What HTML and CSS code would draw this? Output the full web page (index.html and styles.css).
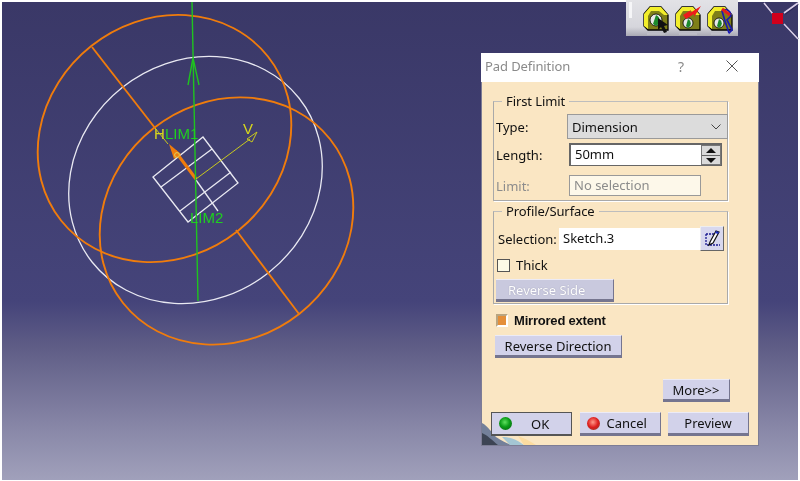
FILE: index.html
```html
<!DOCTYPE html>
<html lang="en">
<head>
    <meta charset="UTF-8">
    <title>Pad Definition</title>
    <link rel="stylesheet" href="styles.css">
</head>
<body>
<div class="viewport">

    <svg class="scene" width="800" height="481" viewBox="0 0 800 481">
        <g fill="none" stroke="#e9e9f2" stroke-width="1.3">
            <ellipse cx="195.5" cy="180" rx="132" ry="118" transform="rotate(-38.4 195.5 180)"/>
            <path d="M153 177 L203 137 L238 183 L188 222 Z"/>
            <path d="M161 187 L212 149"/>
            <path d="M180 211 L231 172"/>
            <path d="M196 180 L218 211"/>
        </g>
        <g fill="none" stroke="#f07c0c" stroke-width="1.9">
            <ellipse cx="164.5" cy="138.5" rx="132" ry="118" transform="rotate(-38.4 164.5 138.5)"/>
            <ellipse cx="226.5" cy="221" rx="132" ry="118" transform="rotate(-38.4 226.5 221)"/>
            <path d="M92 47 L155 128"/>
            <path d="M236 230 L299 314"/>
            <path d="M196 179 L175 151" stroke-width="3.2"/>
        </g>
        <path d="M169 144 L181 154 L174 159 Z" fill="#f07c0c"/>
        <circle cx="177" cy="155" r="2.4" fill="none" stroke="#d8d060" stroke-width="1"/>
        <g fill="none" stroke="#1fc41f" stroke-width="1.4">
            <path d="M192 2 L198 301"/>
            <path d="M193 58 L188 85 M193 58 L199 85"/>
        </g>
        <g fill="none" stroke="#c9c91e" stroke-width="1">
            <path d="M196 179 L250 139"/>
            <path d="M247 139 L257 132 L252 142 Z"/>
            <path d="M155 128 L168 144"/>
        </g>
        <text class="scene-label scene-label-yellow" x="154" y="139">H</text>
        <text class="scene-label scene-label-green" x="165" y="139">LIM1</text>
        <text class="scene-label scene-label-green" x="190" y="223">LIM2</text>
        <text class="scene-label scene-label-yellow" x="243" y="134">V</text>
        <path d="M764 3 L773 14 M784 24 L797 38 M784 13 L797 3" fill="none" stroke="#2a2858" stroke-width="2" transform="translate(1 1)"/>
        <path d="M764 3 L773 14 M784 24 L798 39 M784 13 L798 3" fill="none" stroke="#d9cfe8" stroke-width="1.6"/>
        <rect x="772" y="13" width="11" height="11" fill="#d0001c"/>
    </svg>

    <div class="toolbar">
        <span class="toolbar-grip"></span>
        <svg class="tool-icon" width="26" height="30" viewBox="0 0 26 30">
            <path d="M1 9 L7 2 L18 2 L25 10 L25 25 L5 25 L1 21 Z" fill="#7f7f18" stroke="#000" stroke-width="1.3"/>
            <path d="M1 9 L7 2 L18 2 L25 10 L21 10 L16 6 L8 6 L5 11 L5 24 L1 21 Z" fill="#f2ee2c"/>
            <circle cx="13" cy="15" r="6" fill="#e8e8e8" stroke="#000" stroke-width="0.8"/>
            <path d="M13 10 a6 6 0 0 1 0 11 l-3 -2 Z" fill="#1c8a2c"/>
            <path d="M15 13 L15 25 L18 22 L21 28 L24 27 L21 21 L25 20 Z" fill="#111"/>
            <path d="M4 29 L22 29" stroke="#c6c6ce" stroke-width="1"/>
        </svg>
        <svg class="tool-icon" width="26" height="30" viewBox="0 0 26 30">
            <path d="M1 9 L7 2 L18 2 L25 10 L25 25 L5 25 L1 21 Z" fill="#7f7f18" stroke="#000" stroke-width="1.3"/>
            <path d="M1 9 L7 2 L18 2 L25 10 L21 10 L16 6 L8 6 L5 11 L5 24 L1 21 Z" fill="#f2ee2c"/>
            <circle cx="13" cy="18" r="5" fill="#e8e8e8" stroke="#000" stroke-width="0.8"/>
            <path d="M13 14 a5 5 0 0 1 0 9 l-2 -2 Z" fill="#1c8a2c"/>
            <path d="M8 10 L16 5 L15 8 L26 1 L19 12 L19 9 L11 14 Z" fill="#ee1c1c"/>
            <path d="M4 29 L22 29" stroke="#c6c6ce" stroke-width="1"/>
        </svg>
        <svg class="tool-icon" width="26" height="30" viewBox="0 0 26 30">
            <path d="M1 9 L7 2 L18 2 L25 10 L25 25 L5 25 L1 21 Z" fill="#7f7f18" stroke="#000" stroke-width="1.3"/>
            <path d="M1 9 L7 2 L18 2 L25 10 L21 10 L16 6 L8 6 L5 11 L5 24 L1 21 Z" fill="#f2ee2c"/>
            <circle cx="12" cy="18" r="5" fill="#e8e8e8" stroke="#000" stroke-width="0.8"/>
            <path d="M12 14 a5 5 0 0 1 0 9 l-2 -2 Z" fill="#1c8a2c"/>
            <path d="M15 6 a5 4 30 1 1 8 6 L20 15 L25 25 L22 28 L18 16 Z" fill="none" stroke="#1a1ab0" stroke-width="1.7"/>
            <path d="M15 4 L23 10" stroke="#e21c1c" stroke-width="3"/>
            <path d="M4 29 L22 29" stroke="#c6c6ce" stroke-width="1"/>
        </svg>
    </div>

    <div class="dialog">
        <div class="dialog-title">
            <span class="dialog-title-text">Pad Definition</span>
            <span class="dialog-help">?</span>
            <svg class="dialog-close" width="12" height="12" viewBox="0 0 12 12">
                <path d="M0.5 0.5 L11.5 11.5 M11.5 0.5 L0.5 11.5" fill="none" stroke="#555" stroke-width="1"/>
            </svg>
        </div>

        <div class="dialog-body">
            <svg class="dialog-swoosh" width="54" height="22" viewBox="0 0 54 22">
                <path d="M0 0 C6 3 10 10 14 14 C20 18 24 20 30 22 L0 22 Z" fill="#74809a"/>
                <path d="M0 10 C5 12 10 17 16 22 L0 22 Z" fill="#3d4454"/>
                <path d="M20 14 C30 14 36 18 42 22 L28 22 Z" fill="#a4c6d4"/>
                <path d="M36 13 C42 15 48 18 54 22 L42 22 Z" fill="#fcdca0"/>
            </svg>

            <fieldset class="group group-limit">
                <legend>First Limit</legend>
                <div class="row row-type">
                    <span class="row-label">Type:</span>
                    <div class="combo">
                        <span>Dimension</span>
                        <svg width="10" height="6" viewBox="0 0 10 6"><path d="M0.5 0.5 L5 5 L9.5 0.5" fill="none" stroke="#444"/></svg>
                    </div>
                </div>
                <div class="row row-length">
                    <span class="row-label">Length:</span>
                    <div class="spinner">
                        <span class="spinner-value">50mm</span>
                        <div class="spinner-arrows">
                            <span class="arrow-up"></span>
                            <span class="arrow-down"></span>
                        </div>
                    </div>
                </div>
                <div class="row row-limit">
                    <span class="row-label row-label-off">Limit:</span>
                    <div class="field field-off">No selection</div>
                </div>
            </fieldset>

            <fieldset class="group group-profile">
                <legend>Profile/Surface</legend>
                <div class="row row-selection">
                    <span class="row-label">Selection:</span>
                    <div class="field field-sketch">Sketch.3</div>
                    <button class="sketch-btn" type="button">
                        <svg width="20" height="20" viewBox="0 0 20 20">
                            <path d="M3 5 L12 5 M3 5 L3 16 L17 16" fill="none" stroke="#1a1a90" stroke-width="1.3" stroke-dasharray="2 1"/>
                            <path d="M7 13 L13 2 L16 3 L10 14 L6 16 Z" fill="#fff" stroke="#111" stroke-width="1.2"/>
                            <path d="M13 2 L16 3 L15 5 L12 4 Z" fill="#2030c0"/>
                        </svg>
                    </button>
                </div>
                <label class="check-row"><span class="check"></span>Thick</label>
                <button class="btn btn-off btn-side" type="button">Reverse Side</button>
            </fieldset>

            <div class="mirror-row">
                <span class="mirror-check"></span>
                <span class="mirror-text">Mirrored extent</span>
            </div>
            <button class="btn btn-direction" type="button">Reverse Direction</button>

            <div class="more-row">
                <button class="btn btn-more" type="button">More&gt;&gt;</button>
            </div>

            <div class="actions">
                <button class="btn btn-action btn-ok" type="button"><span class="led led-green"></span>OK</button>
                <button class="btn btn-action btn-cancel" type="button"><span class="led led-red"></span>Cancel</button>
                <button class="btn btn-action" type="button">Preview</button>
            </div>
        </div>
    </div>
</div>
</body>
</html>
```

FILE: styles.css
```css
/* Page */
html, body {
    margin: 0;
    padding: 0;
    background-color: #fff;
}
* { box-sizing: border-box; }
.viewport {
    position: relative;
    width: 800px;
    height: 481px;
    overflow: hidden;
    font-family: "Noto Sans", "Open Sans", Arial, sans-serif;
    font-size: 13px;
    color: #111;
}
.scene {
    position: absolute;
    left: 0;
    top: 0;
    background: linear-gradient(to bottom, #3a3867 0, #45447a 300px, #5f5d86 345px, #8a89a9 430px, #a2a2bc 481px) no-repeat 2px 2px / 796px 478px;
    filter: blur(0.3px);
}
.scene-label {
    font-family: "Liberation Sans", Arial, sans-serif;
    font-size: 15px;
}
.scene-label-green { fill: #1fd01f; }
.scene-label-yellow { fill: #d6d61e; }

/* Toolbar */
.toolbar {
    position: absolute;
    left: 626px;
    top: 0;
    width: 112px;
    height: 36px;
    display: flex;
    align-items: flex-start;
    gap: 6px;
    padding: 5px 0 0 3px;
    background: linear-gradient(to bottom, #e2e2e6 0, #d6d6dc 75%, #a9a9b4 100%);
    filter: blur(0.3px);
}
.toolbar-grip {
    width: 3px;
    height: 16px;
    margin-top: -3px;
    margin-right: 5px;
    background-color: #f6f6f8;
}
.tool-icon { flex: none; }

/* Dialog */
.dialog {
    position: absolute;
    left: 481px;
    top: 53px;
    width: 278px;
    height: 393px;
    display: flex;
    flex-direction: column;
    filter: blur(0.3px);
}
.dialog-title {
    height: 29px;
    flex: none;
    display: flex;
    align-items: center;
    padding: 0 0 3px 4px;
    background-color: #fff;
    color: #8a8a8a;
    letter-spacing: -0.1px;
}
.dialog-title-text { width: 193px; }
.dialog-help { width: 48px; font-size: 14px; }
.dialog-body {
    position: relative;
    flex: 1;
    padding: 11px 0 0 11px;
    background-color: #fae6c3;
    border: 1px solid #7d7d95;
    border-top: none;
}
.dialog-swoosh {
    position: absolute;
    left: 0;
    bottom: 0;
}

/* Groups */
.group {
    position: relative;
    width: 235px;
    margin: 0;
    padding: 0 0 0 2px;
    border: 1px solid #a9a9a9;
    border-top-color: #bdbdbd;
    box-shadow: 1px 1px 0 #fff;
}
.group legend {
    margin-left: 6px;
    padding: 0 4px;
    line-height: 16px;
    height: 16px;
    letter-spacing: -0.1px;
}
.group-limit { height: 108px; }
.group-profile { height: 101px; margin-top: 2px; }

.row {
    display: flex;
    align-items: center;
}
.row-label { flex: none; }
.row-label-off { color: #8c8c8c; }
.row-type { margin-top: 5px; }
.row-type .row-label { width: 71px; }
.row-length { margin-top: 4px; }
.row-length .row-label { width: 73px; }
.row-limit { margin-top: 9px; }
.row-limit .row-label { width: 73px; }

.combo {
    width: 161px;
    height: 25px;
    margin-right: -1px;
    display: flex;
    justify-content: space-between;
    align-items: center;
    padding: 0 6px 0 4px;
    background-color: #dcdcdc;
    border: 1px solid #9a9a9a;
}
.spinner {
    width: 153px;
    height: 23px;
    display: flex;
    background-color: #fff;
    border: 1px solid #666;
    border-top-width: 2px;
    border-left-width: 2px;
}
.spinner-value {
    flex: 1;
    padding-left: 4px;
    line-height: 18px;
}
.spinner-arrows {
    width: 20px;
    display: flex;
    flex-direction: column;
    gap: 1px;
    background-color: #666;
    border: 1px solid #777;
}
.arrow-up, .arrow-down {
    flex: 1;
    position: relative;
    background-color: #dadada;
}
.arrow-up::after, .arrow-down::after {
    content: "";
    position: absolute;
    left: 4px;
    top: 2px;
    border-left: 5px solid transparent;
    border-right: 5px solid transparent;
}
.arrow-up::after { border-bottom: 5px solid #111; }
.arrow-down::after { border-top: 5px solid #111; }

.field {
    height: 21px;
    line-height: 19px;
    padding-left: 4px;
    background-color: #fff;
    border: 1px solid #999;
}
.field-off {
    width: 132px;
    color: #8c8c8c;
    background-color: #fdf8ea;
}
.row-selection { margin-top: 7px; padding-left: 2px; }
.row-selection .row-label { width: 61px; }
.field-sketch {
    width: 141px;
    height: 22px;
    line-height: 20px;
    border: none;
}
.sketch-btn {
    width: 24px;
    height: 25px;
    padding: 2px 0 0 2px;
    background-color: #d8d8ee;
    border: 1px solid;
    border-color: #eee #666 #666 #eee;
    display: block;
}

.check-row {
    display: flex;
    align-items: center;
    gap: 6px;
    height: 18px;
    margin-top: 5px;
    padding-left: 1px;
}
.check {
    width: 13px;
    height: 13px;
    background-color: #fdfae6;
    border: 1px solid #555;
}

/* Buttons */
.btn {
    display: block;
    margin: 0;
    padding: 0;
    height: 23px;
    font: inherit;
    color: #111;
    background-color: #d2d2ea;
    border: none;
    border-top: 1px solid #ecebf6;
    border-bottom: 3px solid #75758f;
    border-right: 1px solid #75758f;
}
.btn-off {
    color: #fff;
    background-color: #c9c9de;
    text-shadow: 0 0 1px #8a8aa0;
}
.btn-side {
    width: 118px;
    margin-top: 5px;
    padding-left: 12px;
    text-align: left;
}
.mirror-row {
    display: flex;
    align-items: center;
    gap: 6px;
    height: 18px;
    margin-top: 7px;
    padding-left: 3px;
}
.mirror-check {
    width: 12px;
    height: 13px;
    background-color: #e48f3a;
    border: 2px solid #b9a581;
    border-right-color: #fff;
    border-bottom-color: #fff;
}
.mirror-text {
    font-family: "Liberation Sans", Arial, sans-serif;
    font-weight: 700;
    letter-spacing: -0.2px;
}
.btn-direction { width: 127px; margin: 6px 0 0 2px; }
.more-row {
    display: flex;
    margin-top: 21px;
    padding-left: 170px;
}
.btn-more { width: 67px; }
.actions {
    position: relative;
    display: flex;
    gap: 7.5px;
    margin: 10px 0 0 -2px;
}
.btn-action {
    width: 81px;
    height: 24px;
    display: flex;
    align-items: center;
    justify-content: center;
}
.btn-ok {
    justify-content: flex-start;
    gap: 19px;
    padding-left: 7px;
    border: 1px solid #555;
    border-bottom-width: 2px;
}
.btn-cancel {
    justify-content: flex-start;
    gap: 7px;
    padding-left: 7px;
}
.led {
    width: 13px;
    height: 13px;
    border-radius: 50%;
}
.led-green { background: radial-gradient(circle at 45% 40%, #5fe05f 0, #0b9c18 45%, #075a10 100%); }
.led-red { background: radial-gradient(circle at 45% 40%, #ff9a8a 0, #dd1c1c 50%, #7a4a30 100%); }
```
